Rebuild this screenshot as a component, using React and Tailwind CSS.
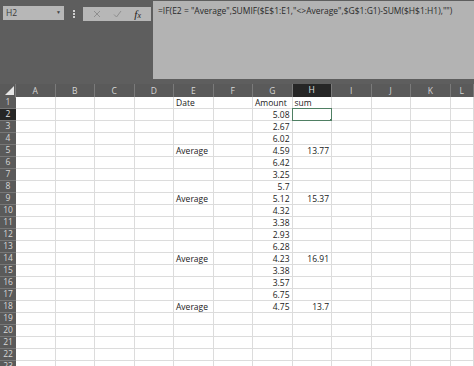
import React from 'react'

const cols = ['A', 'B', 'C', 'D', 'E', 'F', 'G', 'H', 'I', 'J', 'K', 'L']

// row number -> { E, G, H }
const data = {
  1: { E: 'Date', G: 'Amount', H: 'sum', text: true },
  2: { G: '5.08' },
  3: { G: '2.67' },
  4: { G: '6.02' },
  5: { E: 'Average', G: '4.59', H: '13.77' },
  6: { G: '6.42' },
  7: { G: '3.25' },
  8: { G: '5.7' },
  9: { E: 'Average', G: '5.12', H: '15.37' },
  10: { G: '4.32' },
  11: { G: '3.38' },
  12: { G: '2.93' },
  13: { G: '6.28' },
  14: { E: 'Average', G: '4.23', H: '16.91' },
  15: { G: '3.38' },
  16: { G: '3.57' },
  17: { G: '6.75' },
  18: { E: 'Average', G: '4.75', H: '13.7' },
}

const rows = Array.from({ length: 23 }, (_, i) => i + 1)
const grid = 'grid grid-cols-[16px_repeat(11,39.5px)_1fr]'

function Cell({ row, col }) {
  const d = data[row] || {}
  const v = d[col]
  const selected = row === 2 && col === 'H'
  const left = col === 'E' || d.text
  return (
    <div className={`relative h-[12px] border-r border-b border-[#dcdcdc] bg-white text-[8.5px] leading-[11px] text-[#1a1a1a] px-[2px] whitespace-nowrap ${left ? 'text-left' : 'text-right'}`}>
      {v}
      {selected && (
        <div className="absolute -left-px -top-px -right-px -bottom-px border-[1.5px] border-[#4f7f63]">
          <div className="absolute -right-[2px] -bottom-[2px] w-[3px] h-[3px] bg-[#4f7f63]" />
        </div>
      )}
    </div>
  )
}

export default function App() {
  return (
    <div className="w-[474px] h-[366px] overflow-hidden bg-white" style={{ fontFamily: '"Open Sans", "Liberation Sans", sans-serif' }}>
      {/* formula bar area */}
      <div className="h-[84px] bg-[#5e5e5e] flex">
        <div className="flex items-start pt-[6px] pl-[3px]">
          <div className="w-[61px] h-[14px] bg-[#b7b7b7] flex items-center justify-between px-[3px] text-[8.5px] text-[#3a3a3a]">
            <span>H2</span>
            <span className="text-[5px] text-[#444]">▼</span>
          </div>
          <div className="w-[19px] flex flex-col items-center gap-[1px] pt-[4px]">
            <div className="w-[2px] h-[2px] bg-[#cfcfcf]" />
            <div className="w-[2px] h-[2px] bg-[#cfcfcf]" />
            <div className="w-[2px] h-[2px] bg-[#cfcfcf]" />
          </div>
          <div className="w-[68px] h-[14px] mt-[1px] bg-[#b7b7b7] flex items-center justify-around px-[4px]">
            <svg width="8" height="8" viewBox="0 0 8 8">
              <path d="M1 1 L7 7 M7 1 L1 7" stroke="#8e8e8e" strokeWidth="1" />
            </svg>
            <svg width="9" height="8" viewBox="0 0 9 8">
              <path d="M1 4.5 L3.5 7 L8 1" stroke="#8e8e8e" strokeWidth="1" fill="none" />
            </svg>
            <span className="text-[11px] italic text-[#222] leading-none" style={{ fontFamily: '"Liberation Serif", serif' }}>
              f<span className="text-[8px]">x</span>
            </span>
          </div>
        </div>
        <div className="ml-[2px] mt-[1px] h-[78px] flex-1 bg-[#b3b3b3] pl-[5px] pt-[4px] text-[8.5px] text-[#2a2a2a] whitespace-nowrap">
          =IF(E2 = "Average",SUMIF($E$1:E1,"&lt;&gt;Average",$G$1:G1)-SUM($H$1:H1),"")
        </div>
      </div>

      {/* column headers */}
      <div className={`${grid} h-[13px] bg-[#5a5a5a]`}>
        <div className="relative border-r border-[#7a7a7a]">
          <svg className="absolute left-[5px] top-[2px]" width="9" height="9" viewBox="0 0 9 9">
            <path d="M9 0 L9 9 L0 9 Z" fill="#e6e6e6" />
          </svg>
        </div>
        {cols.map((c) => (
          <div
            key={c}
            className={`flex items-center justify-center text-[8.5px] border-r border-[#7a7a7a] ${c === 'H' ? 'bg-[#262626] text-[#e0e0e0] border-b border-b-[#4f7f63]' : 'text-[#d6d6d6]'}`}
          >
            {c}
          </div>
        ))}
      </div>

      {/* rows */}
      {rows.map((r) => (
        <div key={r} className={grid}>
          <div className={`h-[12px] flex items-center justify-center text-[8.5px] border-b border-[#777] ${r === 2 ? 'bg-[#262626] text-[#e0e0e0]' : 'bg-[#5a5a5a] text-[#d6d6d6]'}`}>
            {r}
          </div>
          {cols.map((c) => (
            <Cell key={c} row={r} col={c} />
          ))}
        </div>
      ))}
    </div>
  )
}
